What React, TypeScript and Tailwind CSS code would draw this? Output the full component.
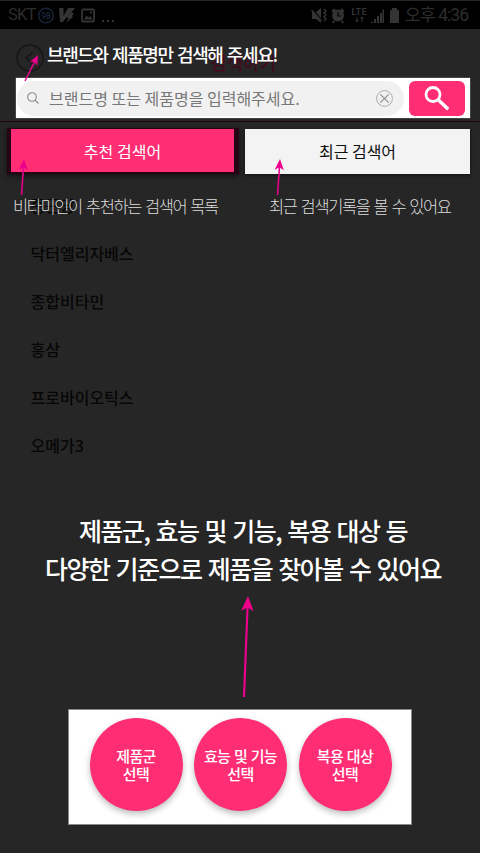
import React from "react";

const keywords = ["종근당", "닥터엘리자베스", "종합비타민", "홍삼", "프로바이오틱스", "오메가3"];
const filters = [
  ["제품군", "선택"],
  ["효능 및 기능", "선택"],
  ["복용 대상", "선택"],
];

function StatusBar() {
  return (
    <div className="flex h-[29px] shrink-0 items-center border-t border-[#262626] bg-black pl-2 pr-[12px] font-['Roboto','Noto_Sans_CJK_KR',sans-serif] text-[17px] text-[#2d2d2d]">
      <span className="w-[30px] text-[16.500px] tracking-[-0.800px]">SKT</span>
      <svg className="h-[17px] w-[78px]" viewBox="38 6 78 17" fill="none">
        <circle cx="46" cy="14.500" r="7.300" stroke="#172337" strokeWidth="1.500" />
        <text x="46" y="17.500" textAnchor="middle" fontSize="8.500" fill="#1f3050">98</text>
        <path d="M59 7h4.500v8L68 7h7l-4 5h3l-2 3.500h1.500L66 22l3-5h-2.500l3-5-6.500 9h-3z" fill="#343434" />
        <rect x="82" y="8.500" width="12" height="12" rx="1" stroke="#343434" strokeWidth="1.800" />
        <path d="M84 18.500l2.500-4 2 2 2-1.500 2 3.500zM90 10.500h2v2h-2z" fill="#343434" />
        <path d="M102 19h2v2h-2zM107 19h2v2h-2zM112 19h2v2h-2z" fill="#343434" />
      </svg>
      <div className="flex-1" />
      <svg className="mr-[4px] h-[18px] w-[90px]" viewBox="311 5 90 18" fill="none">
        <path d="M312 11h4l5-4v15l-5-4h-4z" fill="#343434" />
        <path d="M312 8l10 12" stroke="#000" strokeWidth="2" />
        <path d="M311.500 9l10 11M324 8l2 2-2 2 2 2-2 2 2 2-2 2" stroke="#343434" strokeWidth="1.400" />
        <circle cx="338" cy="14.500" r="5.900" fill="#343434" />
        <path d="M332 11l3-3M344 11l-3-3M334 20l-1 2M342 20l1 2" stroke="#343434" strokeWidth="2" />
        <path d="M338 11v4h3" stroke="#000" strokeWidth="1.200" />
        <text x="351.500" y="14" fontSize="8.500" fontWeight="700" textLength="15" fill="#343434">LTE</text>
        <path d="M357 16v5M355.500 19l1.500 2 1.500-2M362 21v-5M360.500 18l1.500-2 1.500 2" stroke="#343434" />
        <path d="M371 21v1h2v-1zM374 18h2v4h-2zM377 15h2v7h-2zM380 12h2v10h-2zM382.500 8.500h1.500V22h-1.500z" fill="#343434" />
        <path d="M390 9h2V7h5v2h2v13h-9z" fill="#343434" />
      </svg>
      <span className="mt-[2px] whitespace-nowrap text-[17.500px] leading-none tracking-[-1px]">오후 4:36</span>
    </div>
  );
}

function Arrow({ className, from, to, head = 11 }: { className: string; from: [number, number]; to: [number, number]; head?: number }) {
  const angle = (Math.atan2(to[1] - from[1], to[0] - from[0]) * 180) / Math.PI;
  const length = Math.hypot(to[0] - from[0], to[1] - from[1]);
  return (
    <svg className={`absolute overflow-visible ${className}`} width="1" height="1" fill="#ec008c">
      <g transform={`rotate(${angle})`}>
        <rect x={-length} y={-head / 14} width={length - head * 0.6} height={head / 7} />
        <path d={`M0 0 ${-head} ${-head * 0.42} ${-head * 0.76} 0 ${-head} ${head * 0.42}z`} />
      </g>
    </svg>
  );
}

function SearchBar() {
  return (
    <div className="ml-[15.500px] mr-[10px] flex h-10 shrink-0 items-center bg-white pl-px pr-[5.500px] shadow-[0_0_1px_#dfe8e3]">
      <div className="flex h-[35px] w-[387px] items-center rounded-full bg-[#f1f1f1] pl-[10.500px] pr-[11px]">
        <svg className="h-3 w-3" viewBox="0 0 12 12" fill="none" stroke="#8a8a8a" strokeWidth="1.100">
          <circle cx="5" cy="5" r="4.300" />
          <path d="M8 8l3.500 3.500" />
        </svg>
        <span className="ml-[10px] whitespace-nowrap text-base leading-none text-[#777]">브랜드명 또는 제품명을 입력해주세요.</span>
        <svg className="ml-auto h-[17px] w-[17px]" viewBox="0 0 17 17" fill="none" stroke="#aaa">
          <circle cx="8.500" cy="8.500" r="7.900" />
          <path d="M4.300 4.300l8.400 8.400M12.700 4.300l-8.400 8.400" stroke="#8d8d8d" strokeWidth="1.200" />
        </svg>
      </div>
      <button className="ml-auto flex h-[35px] w-[56px] items-center justify-center rounded-[6px] bg-[#ff2e74]">
        <svg className="h-[26px] w-[26px]" viewBox="0 0 26 26" fill="none" stroke="white">
          <circle cx="9" cy="9.500" r="7" strokeWidth="2.800" />
          <path d="M14.200 14.700l10 9.500" strokeWidth="3.400" />
        </svg>
      </button>
    </div>
  );
}

export default function App() {
  return (
    <div className="relative flex h-[853px] w-[480px] flex-col overflow-hidden bg-[#262626] font-['Noto_Sans_CJK_KR',sans-serif]">
      <StatusBar />
      <header className="flex h-[49px] shrink-0 items-center pl-4">
        <svg className="mt-2 h-7 w-7" viewBox="0 0 28 28" fill="none" stroke="#161616" strokeWidth="1.500">
          <circle cx="14" cy="14" r="13" />
          <path d="M16.500 8.500l-6 5.500 6 5.500" />
        </svg>
        <h1 className="ml-[166px] mt-[16px] text-[18px] font-medium leading-none text-[#420b20]">검색하기</h1>
      </header>
      <SearchBar />
      <div className="mt-[3px] h-px shrink-0 bg-[#260313]" />
      <div className="mt-[6px] flex h-[46px] shrink-0 items-start pl-[7px]">
        <button className="h-[46px] w-[232px] border-b-2 border-l-4 border-r-[5px] border-t border-[#250513] bg-[#ff2e74] text-base leading-none tracking-[0.050px] text-white shadow-[0_2px_5px_#111]">
          추천 검색어
        </button>
        <button className="ml-[6px] mt-px h-[45px] w-[225px] bg-[#f3f3f3] pb-px text-base leading-none text-[#111] shadow-[0_1px_3px_#111]">
          최근 검색어
        </button>
      </div>
      <ul className="mt-2 shrink-0">
        {keywords.map((word) => (
          <li key={word} className="flex h-12 items-center border-b border-[#232323] pb-px pl-[30.500px] text-base font-medium leading-none text-[#060606]">
            {word}
          </li>
        ))}
      </ul>
      <p className="mt-[41px] shrink-0 whitespace-pre pl-[6px] text-center text-[25px] font-medium leading-[38px] tracking-[-1.500px] text-white [word-spacing:2px]">
        {"제품군, 효능 및 기능, 복용 대상 등\n다양한 기준으로 제품을 찾아볼 수 있어요"}
      </p>
      <section className="mb-[28px] ml-[68px] mt-auto flex h-[116px] w-[344px] shrink-0 gap-[11.500px] border border-[#888] bg-white pl-[20.500px] pt-[8px]">
        {filters.map(([label, action]) => (
          <button key={label} className="flex h-[93px] w-[93px] flex-col items-center justify-center whitespace-nowrap rounded-full bg-[#ff2e74] text-[15px] font-medium leading-[18px] tracking-[-0.600px] text-white shadow-[0_3px_6px_#0004] [word-spacing:0.800px]">
            <span>{label}</span>
            <span>{action}</span>
          </button>
        ))}
      </section>

      <p className="absolute left-[47px] top-[42px] whitespace-nowrap text-[18px] font-medium leading-6 tracking-[-1.400px] text-white [word-spacing:1.700px]">브랜드와 제품명만 검색해 주세요!</p>
      <p className="absolute left-[13px] top-[194px] whitespace-nowrap text-[16.500px] font-light leading-6 tracking-[-1.400px] text-[#ddd] [word-spacing:1.700px]">비타미인이 추천하는 검색어 목록</p>
      <p className="absolute left-[269px] top-[194px] whitespace-nowrap text-[16.500px] font-light leading-6 tracking-[-1.400px] text-[#ddd] [word-spacing:1.800px]">최근 검색기록을 볼 수 있어요</p>
      <Arrow className="left-[38px] top-[55px]" from={[25, 81]} to={[38, 55]} head={10} />
      <Arrow className="left-[24px] top-[159px]" from={[21.5, 195]} to={[24, 159]} />
      <Arrow className="left-[280px] top-[159px]" from={[277.5, 195]} to={[280, 159]} />
      <Arrow className="left-[248px] top-[596px]" from={[244, 697]} to={[248, 596]} head={15} />
    </div>
  );
}
